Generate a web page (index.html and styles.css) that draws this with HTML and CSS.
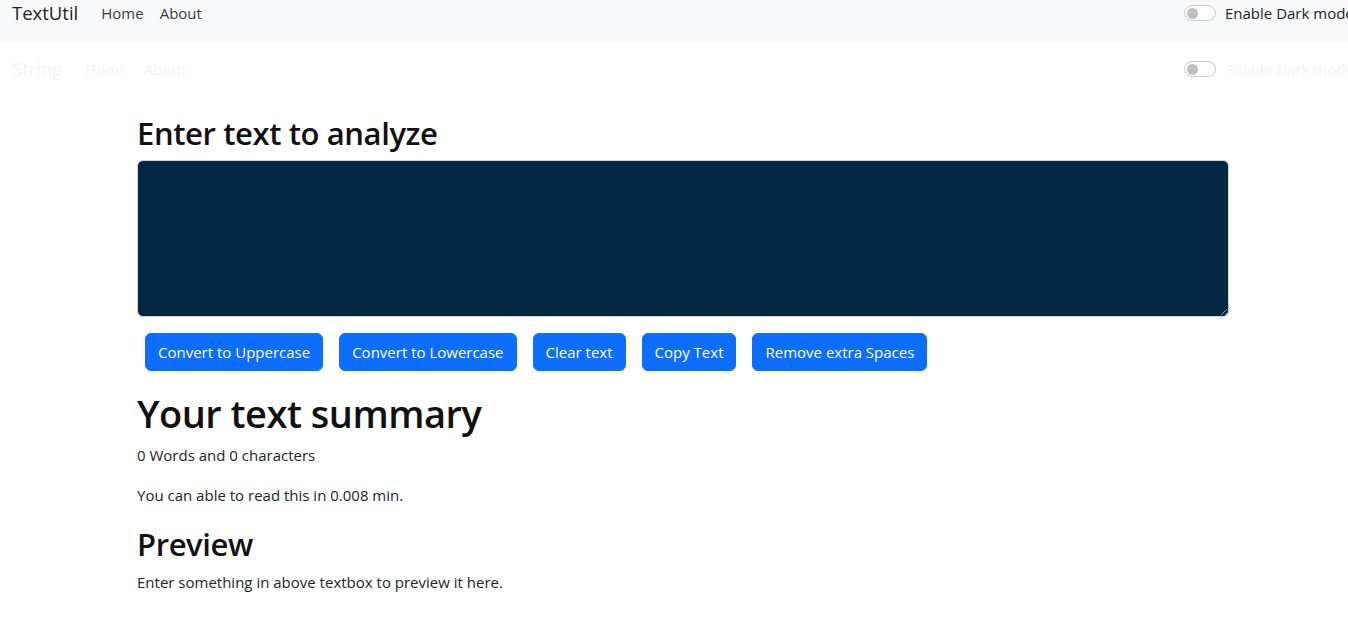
FILE: index.html
```html
<!DOCTYPE html>
<html lang="en">
<head>
<meta charset="utf-8">
<title>TextUtil</title>
<link rel="stylesheet" href="styles.css">
</head>
<body>
<div class="page">
  <nav class="navbar navbar-light">
    <span class="brand">TextUtil</span>
    <ul class="nav-links">
      <li><a class="nav-link" href="#">Home</a></li>
      <li><a class="nav-link" href="#">About</a></li>
    </ul>
    <label class="switch">
      <span class="switch-input"><span class="knob"></span></span>
      <span class="switch-label">Enable Dark mode</span>
    </label>
  </nav>
  <nav class="navbar navbar-ghost">
    <span class="brand">String</span>
    <ul class="nav-links">
      <li><a class="nav-link" href="#">Home</a></li>
      <li><a class="nav-link" href="#">About</a></li>
    </ul>
    <label class="switch">
      <span class="switch-input"><span class="knob"></span></span>
      <span class="switch-label">Enable Dark mode</span>
    </label>
  </nav>

  <main class="container">
    <h2 class="heading-2">Enter text to analyze</h2>
    <textarea class="text-box" rows="6"></textarea>
    <div class="actions">
      <button class="btn">Convert to Uppercase</button>
      <button class="btn">Convert to Lowercase</button>
      <button class="btn">Clear text</button>
      <button class="btn">Copy Text</button>
      <button class="btn">Remove extra Spaces</button>
    </div>
    <section class="summary">
      <h1 class="heading-1">Your text summary</h1>
      <p class="para">0 Words and 0 characters</p>
      <p class="para">You can able to read this in 0.008 min.</p>
      <h2 class="heading-2 preview-title">Preview</h2>
      <p class="para">Enter something in above textbox to preview it here.</p>
    </section>
  </main>
</div>
</body>
</html>
```
FILE: styles.css
```css
* { box-sizing: border-box; }
html, body { margin: 0; padding: 0; }
body {
  font-family: "Segoe UI", "Open Sans", "Noto Sans", sans-serif;
  font-size: 15px;
  line-height: 24px;
  color: #212529;
  background: #fff;
  overflow: hidden;
}
.page { margin-top: -15px; }

.navbar {
  display: flex;
  align-items: center;
  height: 56px;
  padding: 8px 0 8px 12px;
}
.navbar-light { background: #f8f9fa; }
.navbar-ghost { background: #fff; }
.brand {
  font-size: 18.5px;
  line-height: 30px;
  padding: 5px 0;
  margin-right: 15px;
  color: rgba(0,0,0,.9);
}
.nav-links {
  display: flex;
  list-style: none;
  margin: 0;
  padding: 0;
}
.nav-link {
  display: block;
  padding: 8px;
  color: rgba(0,0,0,.8);
  text-decoration: none;
}
.navbar-ghost .brand, .navbar-ghost .nav-link, .navbar-ghost .switch-label { color: #f4f4f4; }

.switch {
  margin-left: auto;
  width: 164px;
  flex: none;
  display: flex;
  align-items: center;
  gap: 9px;
  white-space: nowrap;
  overflow: hidden;
}
.switch-input {
  flex: none;
  width: 32px;
  height: 16px;
  border: 1px solid #c8c8c8;
  border-radius: 8px;
  background: #fff;
  display: flex;
  align-items: center;
  padding-left: 2px;
}
.knob {
  width: 11px;
  height: 11px;
  border-radius: 50%;
  background: #bfbfbf;
}
.switch-label { color: #212529; }

.container {
  margin-left: 137px;
  width: 1092px;
  padding-top: 17px;
}
.heading-2 {
  font-size: 31px;
  font-weight: 600;
  letter-spacing: -0.4px;
  line-height: 38px;
  margin: 0 0 8px;
  color: #111;
}
.text-box {
  display: block;
  width: 100%;
  height: 157px;
  background: #042743;
  color: #fff;
  border: 1px solid #ced4da;
  border-radius: 6px;
  padding: 6px 12px;
  font: inherit;
  margin-bottom: 16px;
  resize: vertical;
}
.actions {
  display: flex;
  gap: 16px;
  padding-left: 8px;
}
.btn {
  font: inherit;
  font-size: 15px;
  line-height: 24px;
  padding: 6px 12px;
  color: #fff;
  background: #0d6efd;
  border: 1px solid #0d6efd;
  border-radius: 6px;
}
.summary { padding-top: 18px; }
.heading-1 {
  font-size: 38px;
  font-weight: 600;
  letter-spacing: -0.5px;
  line-height: 48px;
  margin: 0 0 6px;
  color: #111;
}
.para { margin: 0 0 16px; }
.preview-title { padding-top: 2px; margin-bottom: 7px; }
```
